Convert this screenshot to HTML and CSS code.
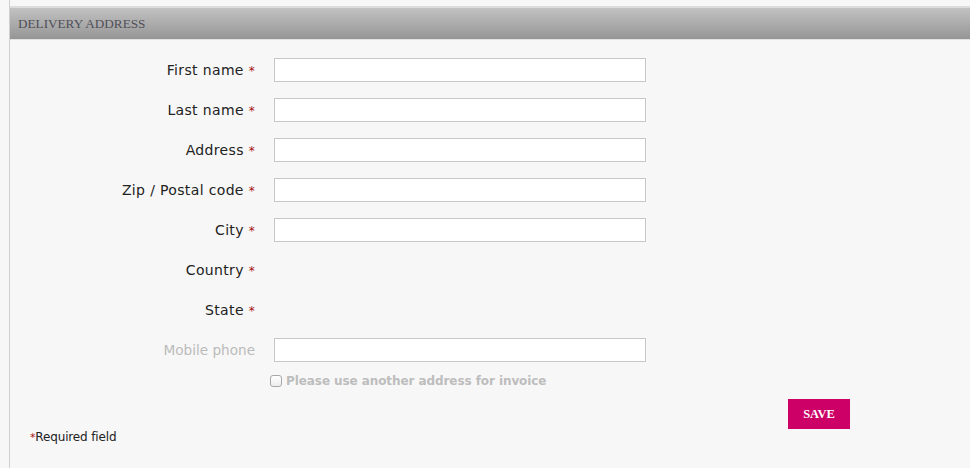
FILE: index.html
```html
<!DOCTYPE html>
<html>
<head>
<meta charset="utf-8">
<link rel="stylesheet" href="styles.css">
</head>
<body>
<div class="panel">
  <div class="header">DELIVERY ADDRESS</div>
  <form class="form">
    <div class="grid">
      <label class="label">First name <span class="req">*</span></label><input class="field" type="text">
      <label class="label">Last name <span class="req">*</span></label><input class="field" type="text">
      <label class="label">Address <span class="req">*</span></label><input class="field" type="text">
      <label class="label">Zip / Postal code <span class="req">*</span></label><input class="field" type="text">
      <label class="label">City <span class="req">*</span></label><input class="field" type="text">
      <label class="label">Country <span class="req">*</span></label><div class="empty"></div>
      <label class="label">State <span class="req">*</span></label><div class="empty"></div>
      <label class="label muted">Mobile phone</label><input class="field" type="text">
    </div>
    <div class="check-row">
      <span class="box"></span><span class="check-text">Please use another address for invoice</span>
    </div>
    <div class="actions">
      <button class="save" type="button">SAVE</button>
    </div>
    <div class="footnote"><span class="req">*</span>Required field</div>
  </form>
</div>
</body>
</html>
```
FILE: styles.css
```css
html, body {
  margin: 0;
  padding: 0;
  background: #f7f7f7;
}
body {
  height: 468px;
  overflow: hidden;
}
.panel {
  margin-left: 9px;
  border-left: 1px solid #cfcfcf;
  padding-top: 6px;
  height: 462px;
}
.header {
  height: 31px;
  border-top: 2px solid #dcdcdc;
  border-bottom: 1px solid #e2e2e2;
  background: linear-gradient(#c2c2c2, #959595);
  font-family: "Liberation Serif", "DejaVu Serif", serif;
  font-size: 13.2px;
  color: #4f4f58;
  line-height: 32px;
  padding-left: 8px;
}
.form {
  padding-top: 18px;
  font-family: "DejaVu Sans", Verdana, sans-serif;
}
.grid {
  display: grid;
  grid-template-columns: 245px 372px;
  column-gap: 19px;
  grid-auto-rows: 24px;
  row-gap: 16px;
}
.label {
  justify-self: end;
  align-self: center;
  font-size: 14px;
  color: #222;
  white-space: nowrap;
  letter-spacing: 0.35px;
}
.label.muted {
  color: #bbb;
  letter-spacing: 0;
  font-size: 13.6px;
}
.req {
  color: #a81010;
  font-size: 12px;
}
.field {
  box-sizing: border-box;
  height: 24px;
  width: 372px;
  margin: 0;
  border: 1px solid #c8c8c8;
  background: #fff;
  padding: 0;
}
.check-row {
  display: flex;
  align-items: center;
  margin-top: 12px;
  margin-left: 260px;
  height: 14px;
}
.box {
  box-sizing: border-box;
  width: 12px;
  height: 12px;
  border: 1px solid #a8a8a8;
  border-radius: 3px;
  background: linear-gradient(#fff, #ececec);
  margin-right: 4px;
}
.check-text {
  font-size: 12px;
  font-weight: bold;
  color: #bdbdbd;
  letter-spacing: -0.08px;
}
.actions {
  display: flex;
  margin-top: 11px;
  padding-left: 778px;
}
.save {
  width: 62px;
  height: 30px;
  border: none;
  background: #cc0066;
  color: #fff;
  font-family: "Liberation Serif", "DejaVu Serif", serif;
  font-weight: bold;
  font-size: 12.5px;
  padding: 0;
}
.footnote {
  margin-top: 1px;
  margin-left: 20px;
  font-size: 12px;
  letter-spacing: -0.15px;
  color: #222;
}
.footnote .req {
  font-size: 11px;
}
```
